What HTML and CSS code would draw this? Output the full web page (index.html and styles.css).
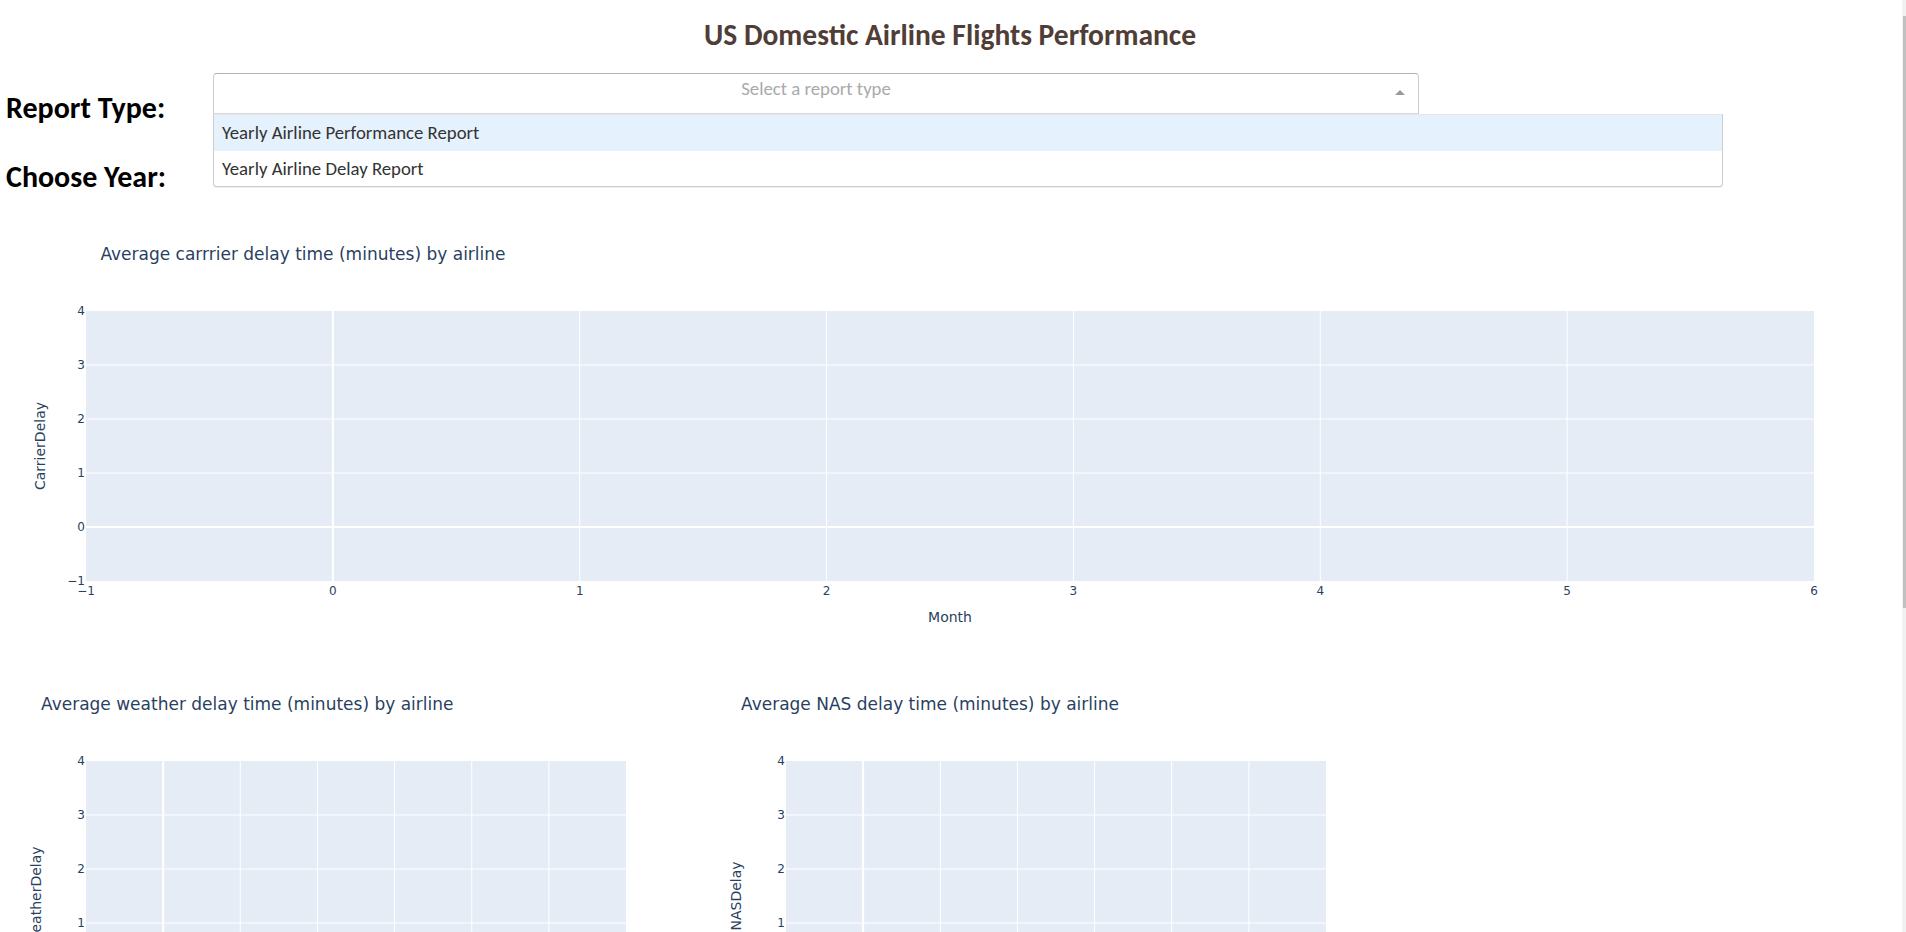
FILE: index.html
```html
<!DOCTYPE html>
<html lang="en">
<head>
<meta charset="utf-8">
<title>US Domestic Airline Flights Performance</title>
<link rel="stylesheet" href="styles.css">
</head>
<body>
<div class="page">
  <h1 class="page-title">US Domestic Airline Flights Performance</h1>

  <div class="control-row">
    <h2 class="control-label">Report Type:</h2>
    <div class="select is-open">
      <div class="select-control">
        <span class="select-placeholder">Select a report type</span>
        <span class="select-arrow"></span>
      </div>
      <div class="select-menu">
        <div class="select-option is-focused">Yearly Airline Performance Report</div>
        <div class="select-option">Yearly Airline Delay Report</div>
      </div>
    </div>
  </div>

  <div class="control-row">
    <h2 class="control-label">Choose Year:</h2>
    <div class="select">
      <div class="select-control">
        <span class="select-placeholder">Select a year</span>
        <span class="select-arrow down"></span>
      </div>
    </div>
  </div>

  <div class="chart chart-wide">
    <svg width="1888" height="450" viewBox="0 0 1888 450">
      <rect class="plot-bg" x="80" y="100" width="1728" height="270"/>
      <g class="grid">
        <line x1="573.71" y1="100" x2="573.71" y2="370"/>
        <line x1="820.57" y1="100" x2="820.57" y2="370"/>
        <line x1="1067.43" y1="100" x2="1067.43" y2="370"/>
        <line x1="1314.29" y1="100" x2="1314.29" y2="370"/>
        <line x1="1561.14" y1="100" x2="1561.14" y2="370"/>
        <line x1="80" y1="154" x2="1808" y2="154"/>
        <line x1="80" y1="208" x2="1808" y2="208"/>
        <line x1="80" y1="262" x2="1808" y2="262"/>
      </g>
      <g class="zero">
        <line x1="326.86" y1="100" x2="326.86" y2="370"/>
        <line x1="80" y1="316" x2="1808" y2="316"/>
      </g>
      <g class="ytick">
        <text x="79" y="104">4</text>
        <text x="79" y="158">3</text>
        <text x="79" y="212">2</text>
        <text x="79" y="266">1</text>
        <text x="79" y="320">0</text>
        <text x="79" y="374">−1</text>
      </g>
      <g class="xtick">
        <text x="80" y="384">−1</text>
        <text x="326.86" y="384">0</text>
        <text x="573.71" y="384">1</text>
        <text x="820.57" y="384">2</text>
        <text x="1067.43" y="384">3</text>
        <text x="1314.29" y="384">4</text>
        <text x="1561.14" y="384">5</text>
        <text x="1808" y="384">6</text>
      </g>
      <text class="axis-title" x="944" y="411" text-anchor="middle">Month</text>
      <text class="axis-title" transform="translate(39,235) rotate(-90)" text-anchor="middle">CarrierDelay</text>
      <text class="chart-title" x="94.4" y="49">Average carrrier delay time (minutes) by airline</text>
    </svg>
  </div>

  <div class="chart-row">
    <div class="chart chart-half">
      <svg width="700" height="450" viewBox="0 0 700 450">
        <rect class="plot-bg" x="80" y="100" width="540" height="270"/>
        <g class="grid">
          <line x1="234.29" y1="100" x2="234.29" y2="370"/>
          <line x1="311.43" y1="100" x2="311.43" y2="370"/>
          <line x1="388.57" y1="100" x2="388.57" y2="370"/>
          <line x1="465.71" y1="100" x2="465.71" y2="370"/>
          <line x1="542.86" y1="100" x2="542.86" y2="370"/>
          <line x1="80" y1="154" x2="620" y2="154"/>
          <line x1="80" y1="208" x2="620" y2="208"/>
          <line x1="80" y1="262" x2="620" y2="262"/>
        </g>
        <g class="zero">
          <line x1="157.14" y1="100" x2="157.14" y2="370"/>
          <line x1="80" y1="316" x2="620" y2="316"/>
        </g>
        <g class="ytick">
          <text x="79" y="104">4</text>
          <text x="79" y="158">3</text>
          <text x="79" y="212">2</text>
          <text x="79" y="266">1</text>
          <text x="79" y="320">0</text>
          <text x="79" y="374">−1</text>
        </g>
        <g class="xtick">
          <text x="80" y="384">−1</text>
          <text x="157.14" y="384">0</text>
          <text x="234.29" y="384">1</text>
          <text x="311.43" y="384">2</text>
          <text x="388.57" y="384">3</text>
          <text x="465.71" y="384">4</text>
          <text x="542.86" y="384">5</text>
          <text x="620" y="384">6</text>
        </g>
        <text class="axis-title" x="350" y="411" text-anchor="middle">Month</text>
        <text class="axis-title" transform="translate(35,235) rotate(-90)" text-anchor="middle">WeatherDelay</text>
        <text class="chart-title" x="35" y="49">Average weather delay time (minutes) by airline</text>
      </svg>
    </div>
    <div class="chart chart-half">
      <svg width="700" height="450" viewBox="0 0 700 450">
        <rect class="plot-bg" x="80" y="100" width="540" height="270"/>
        <g class="grid">
          <line x1="234.29" y1="100" x2="234.29" y2="370"/>
          <line x1="311.43" y1="100" x2="311.43" y2="370"/>
          <line x1="388.57" y1="100" x2="388.57" y2="370"/>
          <line x1="465.71" y1="100" x2="465.71" y2="370"/>
          <line x1="542.86" y1="100" x2="542.86" y2="370"/>
          <line x1="80" y1="154" x2="620" y2="154"/>
          <line x1="80" y1="208" x2="620" y2="208"/>
          <line x1="80" y1="262" x2="620" y2="262"/>
        </g>
        <g class="zero">
          <line x1="157.14" y1="100" x2="157.14" y2="370"/>
          <line x1="80" y1="316" x2="620" y2="316"/>
        </g>
        <g class="ytick">
          <text x="79" y="104">4</text>
          <text x="79" y="158">3</text>
          <text x="79" y="212">2</text>
          <text x="79" y="266">1</text>
          <text x="79" y="320">0</text>
          <text x="79" y="374">−1</text>
        </g>
        <g class="xtick">
          <text x="80" y="384">−1</text>
          <text x="157.14" y="384">0</text>
          <text x="234.29" y="384">1</text>
          <text x="311.43" y="384">2</text>
          <text x="388.57" y="384">3</text>
          <text x="465.71" y="384">4</text>
          <text x="542.86" y="384">5</text>
          <text x="620" y="384">6</text>
        </g>
        <text class="axis-title" x="350" y="411" text-anchor="middle">Month</text>
        <text class="axis-title" transform="translate(35,235) rotate(-90)" text-anchor="middle">NASDelay</text>
        <text class="chart-title" x="35" y="49">Average NAS delay time (minutes) by airline</text>
      </svg>
    </div>
  </div>
</div>

<div class="scrollbar"><div class="scrollbar-thumb"></div></div>
</body>
</html>
```

FILE: styles.css
```css
html {
  overflow: hidden;
}
body {
  margin: 0;
  background: #fff;
  font-family: Carlito, "Liberation Sans", Arial, sans-serif;
}
.page {
  width: 1888px;
  padding-left: 6px;
}
.page-title {
  margin: 20px 0 23px;
  font-size: 29.5px;
  line-height: 30px;
  font-weight: bold;
  color: #503D36;
  text-align: center;
}
.control-row {
  display: flex;
  align-items: flex-start;
}
.control-label {
  margin: 20px 48px 20px 0;
  font-size: 30px;
  line-height: 29px;
  font-weight: bold;
  color: #000;
  white-space: nowrap;
  width: 159px;
}
.select {
  position: relative;
  width: 1206px;
}
.select-control {
  position: relative;
  box-sizing: border-box;
  height: 41px;
  border: 1px solid #ccc;
  border-radius: 4px;
  background: #fff;
  text-align: center;
}
.select.is-open .select-control {
  border-color: #b3b3b3 #ccc #d9d9d9;
  border-bottom-left-radius: 0;
  border-bottom-right-radius: 0;
}
.select-placeholder {
  display: block;
  line-height: 29px;
  font-size: 18.75px;
  color: #aaa;
}
.select-arrow {
  position: absolute;
  right: 13px;
  top: 16px;
  width: 0;
  height: 0;
  border-style: solid;
  border-width: 0 5px 5px;
  border-color: transparent transparent #999;
}
.select-arrow.down {
  border-width: 5px 5px 2.5px;
  border-color: #999 transparent transparent;
}
.select-menu {
  position: absolute;
  top: 41px;
  left: 0;
  z-index: 10;
  box-sizing: border-box;
  width: 1510px;
  background: #fff;
  border: 1px solid #ccc;
  border-top-color: #e6e6e6;
  border-radius: 0 0 4px 4px;
  box-shadow: 0 1px 0 rgba(0, 0, 0, 0.06);
}
.select-option {
  height: 35px;
  line-height: 35px;
  padding: 0 8px;
  font-size: 18.75px;
  color: #333;
}
.select-option.is-focused {
  height: 36px;
  line-height: 36px;
  background: #e5f1fd;
}
.chart {
  display: block;
}
.chart svg {
  display: block;
}
.chart-row {
  display: flex;
}
.plot-bg {
  fill: #E5ECF6;
}
.grid line {
  stroke: #fff;
  stroke-width: 1;
}
.zero line {
  stroke: #fff;
  stroke-width: 2;
}
.ytick text,
.xtick text,
.axis-title,
.chart-title {
  font-family: "DejaVu Sans", Verdana, sans-serif;
  fill: #2a3f5f;
}
.ytick text {
  font-size: 12px;
  text-anchor: end;
}
.xtick text {
  font-size: 12px;
  text-anchor: middle;
}
.axis-title {
  font-size: 14px;
}
.chart-title {
  font-size: 17px;
}
.scrollbar {
  position: fixed;
  top: 0;
  right: 0;
  width: 4px;
  height: 100%;
  background: #f1f1f1;
}
.scrollbar-thumb {
  position: absolute;
  top: 16px;
  left: 1px;
  width: 3px;
  height: 592px;
  background: #c1c1c1;
}
```
